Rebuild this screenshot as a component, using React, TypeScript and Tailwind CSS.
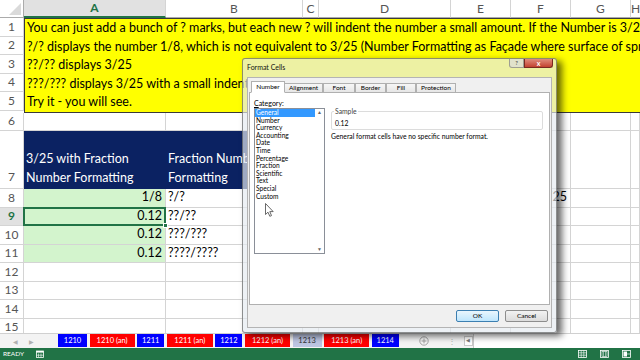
import React from 'react';

const W = ['w-[142px]', 'w-[137px]', 'w-[16px]', 'w-[132px]', 'w-[60px]', 'w-[60px]', 'w-[60px]', 'flex-1'];
const LETTERS = ['A', 'B', 'C', 'D', 'E', 'F', 'G', 'H'];

type Cell = { bg?: string; text?: string; right?: boolean; white?: boolean; active?: boolean };

function RowHead({ n, active, h, bottom }: { n: number; active?: boolean; h: string; bottom?: boolean }) {
  return (
    <div
      className={`${h} w-[24px] shrink-0 flex justify-center ${bottom ? 'items-end pb-[2px]' : 'items-center'} text-[12px] border-r border-b border-[#d4d4d4] ${
        active ? 'bg-[#e1e1e1] text-[#217346] font-bold' : 'bg-white text-[#555]'
      }`}
    >
      {n}
    </div>
  );
}

function Row({ n, cells, h = 'h-[18.5px]', activeHead }: { n: number; cells?: Cell[]; h?: string; activeHead?: boolean }) {
  return (
    <div className={`flex ${h} shrink-0`}>
      <RowHead n={n} h={h} active={activeHead} />
      {W.map((w, i) => {
        const c = (cells && cells[i]) || {};
        return (
          <div
            key={i}
            className={`${w} shrink-0 relative border-r border-b border-[#d4d4d4] ${c.bg || 'bg-white'} flex items-center ${
              c.right ? 'justify-end pr-[3px]' : 'pl-[2px]'
            } whitespace-nowrap overflow-visible`}
          >
            {c.text && <span className="relative z-[1]">{c.text}</span>}
            {c.active && (
              <>
                <div className="absolute -inset-[1px] border-2 border-[#217346] z-[2]" />
                <div className="absolute -right-[3px] -bottom-[3px] w-[5px] h-[5px] bg-[#217346] border border-white z-[3]" />
              </>
            )}
          </div>
        );
      })}
    </div>
  );
}

const TEXT_LINES = [
  'You can just add a bunch of ? marks, but each new ? will indent the number a small amount. If the Number is 3/25',
  '?/? displays the number 1/8, which is not equivalent to 3/25 (Number Formatting as Façade where surface of spreadsheet',
  '??/?? displays 3/25',
  '???/??? displays 3/25 with a small indent',
  'Try it - you will see.',
];

const CATEGORIES = ['General', 'Number', 'Currency', 'Accounting', 'Date', 'Time', 'Percentage', 'Fraction', 'Scientific', 'Text', 'Special', 'Custom'];

const TABS: { label: string; w: string; sel?: boolean }[] = [
  { label: 'Number', w: 'w-[34px]', sel: true },
  { label: 'Alignment', w: 'w-[39px]' },
  { label: 'Font', w: 'w-[32px]' },
  { label: 'Border', w: 'w-[31px]' },
  { label: 'Fill', w: 'w-[30px]' },
  { label: 'Protection', w: 'w-[40px]' },
];

const SHEETS: { label: string; w: string; kind: 'b' | 'r' | 's' }[] = [
  { label: '1210', w: 'w-[29px]', kind: 'b' },
  { label: '1210 (an)', w: 'w-[45px]', kind: 'r' },
  { label: '1211', w: 'w-[27px]', kind: 'b' },
  { label: '1211 (an)', w: 'w-[46px]', kind: 'r' },
  { label: '1212', w: 'w-[27px]', kind: 'b' },
  { label: '1212 (an)', w: 'w-[45px]', kind: 'r' },
  { label: '1213', w: 'w-[29px]', kind: 's' },
  { label: '1213 (an)', w: 'w-[45px]', kind: 'r' },
  { label: '1214', w: 'w-[27px]', kind: 'b' },
];

function Dialog() {
  return (
    <div className="absolute left-[242px] top-[58px] w-[315px] h-[275px] rounded-[3px] border border-[rgba(60,60,60,0.55)] bg-[rgba(228,234,240,0.68)] shadow-[5px_3px_7px_rgba(0,0,0,0.6)] flex flex-col font-['Lato',sans-serif] text-black z-10">
      {/* title bar */}
      <div className="h-[18px] shrink-0 flex items-start relative">
        <div className="pl-[4px] pt-[4px] text-[7px] leading-[9px] text-[#111]">Format Cells</div>
        <div className="ml-auto mr-[3px] flex">
          <div className="w-[15px] h-[9px] bg-[rgba(220,220,220,0.7)] border border-[rgba(90,90,90,0.5)] border-t-0 rounded-bl-[3px] flex items-center justify-center text-[6px] text-[#333] leading-none">?</div>
          <div className="w-[29px] h-[9px] bg-gradient-to-b from-[#e08c7c] to-[#c2402f] border border-[#7a2a20] border-t-0 rounded-br-[3px] flex items-center justify-center text-[7px] font-bold text-white leading-none">x</div>
        </div>
      </div>
      {/* client */}
      <div className="flex-1 mx-[4px] mb-[4px] bg-[#f0f0f0] border border-[rgba(120,120,120,0.5)] flex flex-col px-[1px] pt-[3px]">
        <div className="flex items-end h-[12px] pl-[2px]">
          {TABS.map((t) => (
            <div
              key={t.label}
              className={`${t.w} shrink-0 flex items-center justify-center text-[6.5px] leading-none border border-[#b0b0b0] ${
                t.sel ? 'h-[12px] bg-white border-b-white relative z-[1] -mr-[1px]' : 'h-[10px] bg-gradient-to-b from-[#f6f6f6] to-[#e4e4e4] border-b-0'
              }`}
            >
              {t.label}
            </div>
          ))}
        </div>
        <div className="h-[213px] shrink-0 bg-white border border-[#b0b0b0] -mt-[1px] flex pl-[4px] pt-[5px]">
          <div className="w-[71px] shrink-0 flex flex-col">
            <div className="h-[10px] text-[7px] leading-[10px]">
              <span className="underline">C</span>ategory:
            </div>
            <div className="h-[146px] border border-[#8a8f98] bg-white flex">
              <div className="flex-1 flex flex-col">
                {CATEGORIES.map((c, i) => (
                  <div
                    key={c}
                    className={`h-[7.6px] leading-[7.6px] text-[6.6px] pl-[1px] ${i === 0 ? 'bg-[#3399ff] text-white' : ''}`}
                  >
                    {c}
                  </div>
                ))}
              </div>
              <div className="w-[9px] flex flex-col justify-between items-center text-[5px] text-[#666] py-[1px] leading-none">
                <span>▲</span>
                <span>▼</span>
              </div>
            </div>
          </div>
          <div className="w-[212px] ml-[6px] flex flex-col">
            <div className="relative mt-[13px] h-[19px] border border-[#dcdcdc] rounded-[2px] pl-[3px] pt-[7px] text-[6.8px] leading-[9px]">
              <span className="absolute left-[2px] -top-[5px] bg-white px-[1px] text-[6.8px] leading-[9px] text-[#444]">Sample</span>
              0.12
            </div>
            <div className="mt-[2px] text-[6.8px] leading-[9px]">General format cells have no specific number format.</div>
          </div>
        </div>
        <div className="flex-1 flex items-center justify-end pr-[2px] gap-[6px]">
          <div className="w-[43px] h-[12px] rounded-[2px] border border-[#3c7fb1] bg-gradient-to-b from-[#eaf6fd] to-[#bee6fd] flex items-center justify-center text-[6.5px]">OK</div>
          <div className="w-[43px] h-[12px] rounded-[2px] border border-[#8d8d8d] bg-gradient-to-b from-[#f2f2f2] to-[#dcdcdc] flex items-center justify-center text-[6.5px]">Cancel</div>
        </div>
      </div>
    </div>
  );
}

export default function App() {
  const navy = 'bg-[#0b2262]';
  const green = 'bg-[#d3f4cd]';
  return (
    <div className="w-[640px] h-[360px] relative overflow-hidden bg-white font-['Lato',sans-serif] text-[12.5px] text-black flex flex-col">
      {/* sheet */}
      <div className="h-[333px] shrink-0 overflow-hidden flex flex-col">
        {/* column headers */}
        <div className="flex h-[18px] shrink-0">
          <div className="w-[24px] shrink-0 border-r border-b border-[#ababab] bg-white relative">
            <svg className="absolute right-[2px] bottom-[2px]" width="12" height="12" viewBox="0 0 12 12">
              <polygon points="12,0 12,12 0,12" fill="#dadada" />
            </svg>
          </div>
          {W.map((w, i) => (
            <div
              key={i}
              className={`${w} shrink-0 flex items-center justify-center text-[12px] border-r border-[#d4d4d4] ${
                i === 0 ? 'bg-[#e1e1e1] text-[#217346] font-bold border-b-2 border-b-[#217346]' : 'bg-white text-[#555] border-b border-b-[#ababab]'
              }`}
            >
              {LETTERS[i]}
            </div>
          ))}
        </div>
        {/* rows 1-5 yellow block */}
        <div className="flex shrink-0">
          <div className="w-[24px] shrink-0 flex flex-col">
            {[1, 2, 3, 4, 5].map((n) => (
              <RowHead key={n} n={n} h="h-[18.5px]" />
            ))}
          </div>
          <div className="flex-1 bg-[#ffff00] border border-r-0 border-[#3a3a3a] flex flex-col overflow-hidden">
            {TEXT_LINES.map((t, i) => (
              <div key={i} className="h-[18.5px] leading-[18.5px] pl-[2px] whitespace-nowrap">
                {t}
              </div>
            ))}
          </div>
        </div>
        <Row n={6} />
        {/* row 7 */}
        <div className="flex h-[58px] shrink-0">
          <RowHead n={7} h="h-[58px]" bottom />
          {W.map((w, i) => (
            <div
              key={i}
              className={`${w} shrink-0 border-r border-b ${i < 3 ? `${navy} border-[#0b2262] text-white` : 'bg-white border-[#d4d4d4]'} flex flex-col justify-end pl-[2px] pb-[1px] leading-[19px] whitespace-nowrap overflow-hidden`}
            >
              {i === 0 && (
                <>
                  <div>3/25 with Fraction</div>
                  <div>Number Formatting</div>
                </>
              )}
              {i === 1 && (
                <>
                  <div>Fraction Number</div>
                  <div>Formatting</div>
                </>
              )}
            </div>
          ))}
        </div>
        <Row n={8} cells={[{ bg: green, text: '1/8', right: true }, { text: '?/?' }, {}, {}, {}, { text: '3/25', right: true }]} />
        <Row n={9} activeHead cells={[{ bg: green, text: '0.12', right: true, active: true }, { text: '??/??' }]} />
        <Row n={10} cells={[{ bg: green, text: '0.12', right: true }, { text: '???/???' }]} />
        <Row n={11} cells={[{ bg: green, text: '0.12', right: true }, { text: '????/????' }]} />
        <Row n={12} />
        <Row n={13} />
        <Row n={14} />
        <Row n={15} />
      </div>

      {/* sheet tabs */}
      <div className="h-[15px] shrink-0 bg-[#f3f3f3] border-t border-[#d0d0d0] flex items-stretch">
        <div className="w-[58px] shrink-0 flex items-center text-[6px] text-[#b0b0b0]">
          <span className="ml-[13px]">◀</span>
          <span className="ml-[11px]">▶</span>
        </div>
        <div className="flex gap-[2.6px] items-stretch pb-[1px]">
          {SHEETS.map((s) => (
            <div
              key={s.label}
              className={`${s.w} shrink-0 flex items-center justify-center text-[7.5px] leading-none ${
                s.kind === 'b' ? 'bg-[#0000ff] text-white' : s.kind === 'r' ? 'bg-[#ff0000] text-white' : 'bg-[#bcc5e2] text-[#333]'
              }`}
            >
              {s.label}
            </div>
          ))}
        </div>
        <div className="ml-[20px] flex items-center">
          <svg width="10" height="10" viewBox="0 0 10 10">
            <circle cx="5" cy="5" r="4.2" fill="none" stroke="#9a9a9a" strokeWidth="0.9" />
            <path d="M5 2.6V7.4M2.6 5H7.4" stroke="#9a9a9a" strokeWidth="0.9" />
          </svg>
        </div>
        <div className="ml-[19px] flex items-center text-[8px] text-[#b0b0b0]">⋮</div>
        <div className="ml-[8px] flex items-center">
          <div className="w-[9px] h-[10px] border border-[#c8c8c8] bg-white flex items-center justify-center text-[5px] text-[#777]">◀</div>
        </div>
        <div className="flex-1 border-l border-[#c8c8c8] bg-white" />
      </div>

      {/* status bar */}
      <div className="flex-1 bg-[#217346] flex items-center text-white">
        <span className="ml-[3px] text-[6.5px] leading-none">READY</span>
        <svg className="ml-[12px]" width="8" height="8" viewBox="0 0 8 8">
          <rect x="0.5" y="1" width="7" height="6.5" fill="none" stroke="#fff" strokeWidth="0.8" />
          <rect x="0.5" y="1" width="7" height="1.6" fill="#fff" />
          <path d="M2.5 3.5V7M5 3.5V7M0.5 5.2H7.5" stroke="#fff" strokeWidth="0.6" />
        </svg>
        <div className="ml-auto flex items-center gap-[13px] mr-[9px]">
          <svg width="9" height="8" viewBox="0 0 9 8">
            <rect x="0.5" y="0.5" width="8" height="7" fill="none" stroke="#fff" strokeWidth="0.8" />
            <path d="M3.2 0.5V7.5M5.8 0.5V7.5M0.5 2.8H8.5M0.5 5.2H8.5" stroke="#fff" strokeWidth="0.6" />
          </svg>
          <svg width="9" height="8" viewBox="0 0 9 8">
            <rect x="0.5" y="0.5" width="8" height="7" fill="none" stroke="#fff" strokeWidth="0.8" />
            <rect x="2" y="1.5" width="5" height="5" fill="none" stroke="#fff" strokeWidth="0.6" />
            <path d="M3.5 1.5V6.5M5.5 1.5V6.5" stroke="#fff" strokeWidth="0.5" />
          </svg>
          <svg width="9" height="8" viewBox="0 0 9 8">
            <rect x="0.5" y="0.5" width="8" height="7" fill="none" stroke="#fff" strokeWidth="0.8" />
            <rect x="1.5" y="1.5" width="3.5" height="5" fill="#fff" />
            <path d="M5 4H8.5" stroke="#fff" strokeWidth="0.6" />
          </svg>
        </div>
      </div>

      <Dialog />

      {/* mouse cursor */}
      <svg className="absolute left-[265px] top-[203px] z-20" width="9" height="14" viewBox="0 0 9 14">
        <path d="M0.5 0.5V11.5L3 9.2L4.8 13.3L6.5 12.6L4.8 8.6H8.2Z" fill="#fff" stroke="#444" strokeWidth="0.8" strokeLinejoin="round" />
      </svg>
    </div>
  );
}
